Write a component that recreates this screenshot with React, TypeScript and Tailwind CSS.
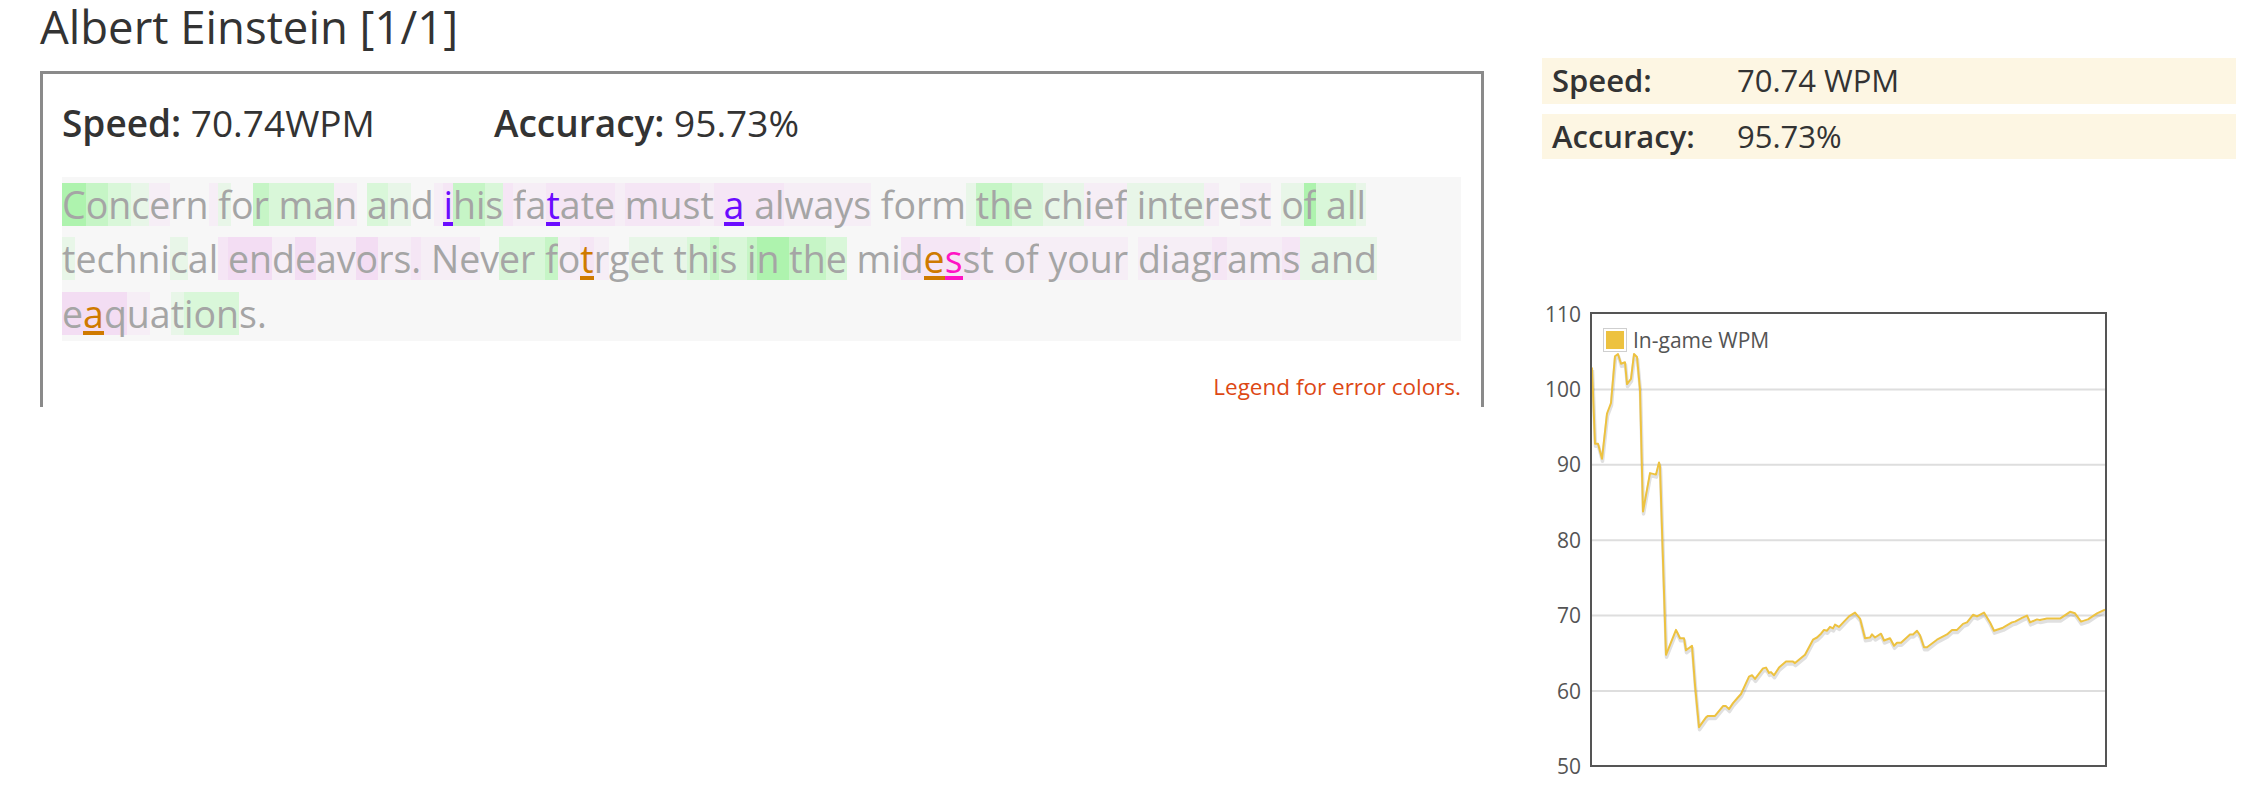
import React from "react";

// heat-map background per typed character
const heat: Record<string, string> = {
  "0": "",
  "1": "bg-[#aef3ae]",
  "2": "bg-[#c6f5c6]",
  "3": "bg-[#d9f7d9]",
  "4": "bg-[#e8f6e8]",
  "5": "bg-[#f6eef6]",
  "6": "bg-[#f5e6f5]",
  "7": "bg-[#f3ddf3]",
};

const errColor: Record<string, string> = {
  p: "text-[#6b0cff] shadow-[inset_0_-4px_0_#6b0cff]",
  o: "text-[#cf7a00] shadow-[inset_0_-4px_0_#cf7a00]",
  m: "text-[#ff14c4] shadow-[inset_0_-4px_0_#ff14c4]",
};

const lines: { text: string; codes: string; errs: Record<number, string> }[] = [
  {
    text: "Concern for man and ihis fatate must a always form the chief interest of all",
    codes: "1234500" + "5402" + "3335" + "0340" + "56223" + "6556666" + "56665" + "66" + "6665555" + "00000" + "4223" + "344555" + "444445055" + "041" + "3334",
    errs: { 20: "p", 27: "p", 37: "p" },
  },
  {
    text: "technical endeavors. Never fotrget this in the midesst of your diagrams and",
    codes: "400000400" + "67757557556" + "555033" + "32565044" + "44323" + "321" + "1223" + "00066665" + "555" + "55555" + "055556556" + "4444",
    errs: { 29: "o", 50: "o", 51: "m" },
  },
  {
    text: "eaquations.",
    codes: "77750433300",
    errs: { 1: "o" },
  },
];

// [page x, wpm]
const pts: [number, number][] = [
  [1592, 102.9], [1595, 92.8], [1598, 92.8], [1602, 90.8], [1607, 96.8], [1611, 98.2],
  [1615, 104.4], [1618, 104.7], [1621, 103.4], [1625, 103.6], [1627, 100.7], [1631, 101.4],
  [1634, 104.7], [1637, 104.3], [1640, 100], [1643, 83.8], [1650, 88.9], [1656, 88.7],
  [1659, 90.3], [1660, 89.8], [1666, 64.8], [1676, 68.1], [1680, 67.0], [1684, 67.0],
  [1686, 65.4], [1692, 66.0], [1695, 60.8], [1699, 55.2], [1706, 56.5], [1708, 56.7],
  [1715, 56.7], [1723, 58.0], [1726, 58.0], [1729, 57.6], [1733, 58.4], [1737, 59.0],
  [1741, 59.6], [1749, 61.9], [1752, 62.1], [1755, 61.6], [1763, 63.0], [1766, 63.1],
  [1769, 62.4], [1771, 62.5], [1774, 62.1], [1779, 63.1], [1786, 63.9], [1793, 63.9],
  [1795, 63.7], [1805, 64.8], [1813, 66.8], [1817, 67.1], [1821, 67.6], [1824, 68.1],
  [1827, 68.0], [1830, 68.5], [1833, 68.3], [1835, 68.8], [1839, 68.5], [1849, 69.9],
  [1855, 70.4], [1860, 69.6], [1865, 67.0], [1870, 67.1], [1872, 67.5], [1875, 67.1],
  [1881, 67.6], [1884, 66.7], [1890, 67.0], [1894, 66.0], [1897, 66.4], [1901, 66.4],
  [1910, 67.5], [1913, 67.5], [1917, 68.0], [1920, 67.4], [1924, 65.8], [1927, 65.8],
  [1937, 66.8], [1947, 67.5], [1952, 68.1], [1957, 68.1], [1963, 68.9], [1967, 69.1],
  [1973, 70.1], [1977, 69.9], [1984, 70.4], [1990, 69.1], [1994, 68.0], [2003, 68.4],
  [2012, 69.1], [2015, 69.2], [2022, 69.7], [2027, 70.0], [2030, 69.1], [2037, 69.5],
  [2040, 69.4], [2047, 69.6], [2060, 69.6], [2070, 70.5], [2075, 70.3], [2081, 69.2],
  [2088, 69.5], [2097, 70.3], [2105, 70.8],
];

const toY = (v: number) => 24 + (110 - v) * 7.54;

function WpmChart() {
  const d = pts
    .map(([x, v], i) => `${i ? "L" : "M"}${(x - 1542).toFixed(1)} ${toY(v).toFixed(1)}`)
    .join(" ");
  return (
    <svg width={694} height={510} className="mt-[131px] block">
      <defs>
        <clipPath id="plot">
          <rect x={50} y={24} width={513} height={451} />
        </clipPath>
      </defs>
      {[100, 90, 80, 70, 60].map((v) => (
        <line key={v} x1={50} x2={563} y1={toY(v)} y2={toY(v)} stroke="#dedede" strokeWidth={2} />
      ))}
      {[110, 100, 90, 80, 70, 60, 50].map((v) => (
        <text key={v} x={39} y={toY(v) + 7.5} textAnchor="end" fontSize={21} fill="#545454">
          {v}
        </text>
      ))}
      <g clipPath="url(#plot)">
        <path d={d} fill="none" stroke="rgba(0,0,0,0.12)" strokeWidth={3.5} transform="translate(0.5 2.5)" strokeLinejoin="round" />
        <path d={d} fill="none" stroke="#edc240" strokeWidth={2} strokeLinejoin="round" />
      </g>
      <rect x={49} y={23} width={515} height={453} fill="none" stroke="#555" strokeWidth={2} />
      <rect x={61.5} y={38.5} width={23} height={23} fill="#fff" stroke="#cfcfcf" />
      <rect x={64} y={41} width={18} height={18} fill="#edc240" />
      <text x={91} y={58} fontSize={21} fill="#545454">
        In-game WPM
      </text>
    </svg>
  );
}

export default function App() {
  return (
    <div className="flex min-h-[809px] bg-white pl-[40px] font-['Open_Sans',sans-serif] text-[#333]">
      <div className="w-[1444px] shrink-0">
        <h1 className="text-[45.5px] font-normal leading-[52px]">Albert Einstein [1/1]</h1>
        <div className="mt-[19px] h-[336px] border-[3px] border-b-0 border-[#8a8a8a] pl-[19px] pr-[20px]">
          <div className="mt-[24px] flex text-[37px] leading-[50px]">
            <div className="w-[432px]">
              <span className="font-semibold">Speed:</span> 70.74WPM
            </div>
            <div>
              <span className="font-semibold">Accuracy:</span> 95.73%
            </div>
          </div>
          <div className="mt-[29px] bg-[#f7f7f7] text-[37.5px] text-[#a5a5a5]">
            {lines.map((ln, li) => (
              <div key={li} className="flex h-[54.5px] items-center whitespace-pre">
                {ln.text.split("").map((ch, ci) => (
                  <span
                    key={ci}
                    className={`inline-block h-[43px] leading-[43px] ${heat[ln.codes[ci]] ?? ""} ${ln.errs[ci] ? errColor[ln.errs[ci]] : ""}`}
                  >
                    {ch}
                  </span>
                ))}
              </div>
            ))}
          </div>
          <div className="mt-[31px] text-right text-[22.5px] leading-[30px] text-[#dd4814]">
            Legend for error colors.
          </div>
        </div>
      </div>

      <div className="ml-[58px] w-[694px] shrink-0 pt-[58px]">
        <div className="flex flex-col gap-[10px] text-[31px] leading-[45.5px]">
          <div className="flex h-[45.5px] bg-[#fdf6e3] pl-[10px]">
            <span className="w-[185px] font-semibold">Speed:</span>
            <span>70.74 WPM</span>
          </div>
          <div className="flex h-[45.5px] bg-[#fdf6e3] pl-[10px]">
            <span className="w-[185px] font-semibold">Accuracy:</span>
            <span>95.73%</span>
          </div>
        </div>
        <WpmChart />
      </div>
    </div>
  );
}
